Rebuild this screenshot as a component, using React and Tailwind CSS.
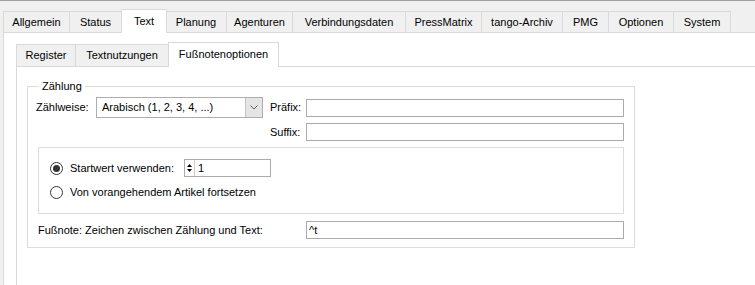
import { useState } from 'react'

const outerTabs = [
  { label: 'Allgemein', w: 67 },
  { label: 'Status', w: 52 },
  { label: 'Text', w: 44 },
  { label: 'Planung', w: 61 },
  { label: 'Agenturen', w: 66 },
  { label: 'Verbindungsdaten', w: 113 },
  { label: 'PressMatrix', w: 76 },
  { label: 'tango-Archiv', w: 81 },
  { label: 'PMG', w: 46 },
  { label: 'Optionen', w: 65 },
  { label: 'System', w: 57 },
]

const innerTabs = [
  { label: 'Register', w: 60 },
  { label: 'Textnutzungen', w: 93 },
  { label: 'Fußnotenoptionen', w: 109 },
]

function Tab({ label, w, active, onClick, base }) {
  if (active) {
    return (
      <button
        onClick={onClick}
        style={{ width: w + 2 }}
        className={`relative z-10 -mx-px mb-[-1px] flex items-start justify-center pt-[3px] bg-white border border-b-0 border-[#d9d9d9] ${base === 'outer' ? 'h-[24px]' : 'h-[25px]'}`}
      >
        {label}
      </button>
    )
  }
  return (
    <button
      onClick={onClick}
      style={{ width: w }}
      className={`mb-[-1px] flex items-center justify-center bg-[#f0f0f0] border border-l-0 first:border-l border-[#d9d9d9] border-b-[#b9b9b9] ${base === 'outer' ? 'h-[22px]' : 'h-[23px]'}`}
    >
      {label}
    </button>
  )
}

function TextBox({ w, value }) {
  return (
    <div style={{ width: w }} className="h-[18px] border border-[#ababab] bg-white flex items-center pl-[2px]">
      {value}
    </div>
  )
}

function Radio({ checked }) {
  return (
    <span className="w-[13px] h-[13px] rounded-full border border-[#333] bg-white flex items-center justify-center shrink-0">
      {checked && <span className="w-[7px] h-[7px] rounded-full bg-[#333]" />}
    </span>
  )
}

export default function App() {
  const [outer, setOuter] = useState('Text')
  const [inner, setInner] = useState('Fußnotenoptionen')
  const [useStart, setUseStart] = useState(true)

  return (
    <div className="w-[755px] h-[285px] overflow-hidden bg-[#f0f0f0] border-t border-[#a0a0a0] flex flex-col font-['Liberation_Sans',Arial,sans-serif] text-[11px] text-black">
      <div className="h-[31px] flex items-end pl-[3px] shrink-0">
        {outerTabs.map((t) => (
          <Tab key={t.label} {...t} base="outer" active={outer === t.label} onClick={() => setOuter(t.label)} />
        ))}
      </div>

      <div className="flex-1 ml-[3px] bg-white border-l border-t border-[#d9d9d9] flex flex-col">
        <div className="h-[33px] flex items-end pl-[12px] shrink-0">
          {innerTabs.map((t) => (
            <Tab key={t.label} {...t} base="inner" active={inner === t.label} onClick={() => setInner(t.label)} />
          ))}
        </div>

        <div className="flex-1 ml-[12px] border-l border-t border-[#d9d9d9] bg-white">
          <fieldset className="mt-[13px] ml-[10px] w-[608px] border border-[#dcdcdc] p-0">
            <legend className="ml-[11px] px-[3px] leading-[13px]">Zählung</legend>
            <div className="pl-[8px] pb-[8px]">
              <div className="flex items-center h-[21px] mt-[4px]">
                <span className="w-[60px]">Zählweise:</span>
                <div className="w-[167px] h-[21px] border border-[#adadad] bg-white flex items-stretch">
                  <span className="flex-1 flex items-center pl-[5px]">Arabisch (1, 2, 3, 4, ...)</span>
                  <span className="w-[17px] bg-[#e5e5e5] border-l border-[#c4c4c4] flex items-center justify-center">
                    <svg width="8" height="5" viewBox="0 0 8 5">
                      <path d="M0.5 0.5 L4 4 L7.5 0.5" fill="none" stroke="#606060" strokeWidth="1" />
                    </svg>
                  </span>
                </div>
                <span className="ml-[7px] w-[36px]">Präfix:</span>
                <TextBox w={318} />
              </div>

              <div className="flex items-center h-[18px] mt-[5px] pl-[234px]">
                <span className="w-[36px]">Suffix:</span>
                <TextBox w={318} />
              </div>

              <div className="ml-[2px] mt-[6px] w-[586px] h-[67px] border border-[#dcdcdc] pl-[11px]">
                <div className="flex items-center h-[18px] mt-[11px]">
                  <button onClick={() => setUseStart(true)} className="flex items-center">
                    <Radio checked={useStart} />
                    <span className="ml-[7px] w-[114px] text-left">Startwert verwenden:</span>
                  </button>
                  <div className="w-[87px] h-[18px] border border-[#ababab] flex items-stretch">
                    <span className="w-[10px] border-r border-[#d0d0d0] flex flex-col items-center justify-center gap-[2px]">
                      <svg width="5" height="3" viewBox="0 0 5 3"><path d="M2.5 0 L5 3 L0 3 Z" fill="#000" /></svg>
                      <svg width="5" height="3" viewBox="0 0 5 3"><path d="M0 0 L5 0 L2.5 3 Z" fill="#000" /></svg>
                    </span>
                    <span className="flex items-center pl-[3px]">1</span>
                  </div>
                </div>
                <button onClick={() => setUseStart(false)} className="flex items-center h-[13px] mt-[9px]">
                  <Radio checked={!useStart} />
                  <span className="ml-[7px]">Von vorangehendem Artikel fortsetzen</span>
                </button>
              </div>

              <div className="flex items-center h-[18px] mt-[7px] pl-[2px]">
                <span className="w-[268px]">Fußnote: Zeichen zwischen Zählung und Text:</span>
                <TextBox w={318} value="^t" />
              </div>
            </div>
          </fieldset>
        </div>
      </div>
    </div>
  )
}
